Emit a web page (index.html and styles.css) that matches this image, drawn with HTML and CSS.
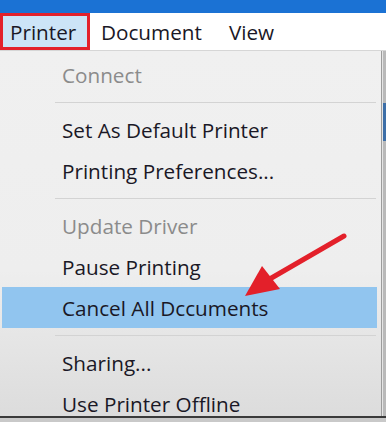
FILE: index.html
```html
<!DOCTYPE html>
<html lang="en">
<head>
    <meta charset="UTF-8">
    <title>Printer menu</title>
    <link rel="stylesheet" href="styles.css">
</head>
<body>
    <div class="window">
        <div class="title-bar"></div>

        <!-- menu bar -->
        <div class="menu-bar">
            <div class="menu-title open">Printer</div>
            <div class="menu-title">Document</div>
            <div class="menu-title">View</div>
        </div>

        <div class="body-row">
            <!-- dropdown -->
            <div class="dropdown">
                <div class="item disabled">Connect</div>
                <div class="separator"></div>
                <div class="item">Set As Default Printer</div>
                <div class="item">Printing Preferences...</div>
                <div class="separator"></div>
                <div class="item disabled">Update Driver</div>
                <div class="item">Pause Printing</div>
                <div class="item selected">Cancel All Dccuments</div>
                <div class="separator"></div>
                <div class="item">Sharing...</div>
                <div class="item">Use Printer Offline</div>
            </div>
            <div class="side-strip">
                <div class="strip-blue"></div>
            </div>
        </div>
        <div class="bottom-edge"></div>

        <!-- annotation arrow -->
        <svg class="arrow" viewBox="0 0 386 422" width="386" height="422">
            <line x1="344" y1="236" x2="268" y2="280" stroke="#e3202a" stroke-width="5" stroke-linecap="round"/>
            <polygon points="245,296 262,266 280,289" fill="#e3202a"/>
        </svg>
    </div>
</body>
</html>
```

FILE: styles.css
```css
* {
    margin: 0;
    padding: 0;
    box-sizing: border-box;
}

body {
    background: #c9c9c9;
    font-family: "Open Sans", "Noto Sans", "Liberation Sans", sans-serif;
}

.window {
    width: 386px;
    height: 422px;
    overflow: hidden;
    position: relative;
    display: flex;
    flex-direction: column;
}

.title-bar {
    height: 13px;
    background: #1b72d4;
}

.menu-bar {
    height: 38px;
    background: #ffffff;
    border-bottom: 1px solid #d6d6d6;
    display: flex;
    align-items: stretch;
}

.menu-title {
    display: flex;
    align-items: center;
    font-size: 20.7px;
    color: #1a1826;
    padding: 0 13px 0 11px;
}

.menu-title + .menu-title + .menu-title {
    padding-left: 14px;
}

.menu-title.open {
    background: #cce4f7;
    border: 3px solid #e3212b;
    padding: 0 0 0 7px;
    width: 90px;
}

.body-row {
    display: flex;
    height: 365px;
}

.dropdown {
    width: 382px;
    height: 100%;
    padding-top: 3px;
    background: linear-gradient(#f0f0f0, #eeeeee 60%, #dcdcdc);
    border-right: 1px solid #9c9c9c;
    overflow: hidden;
}

.item {
    height: 41px;
    display: flex;
    align-items: center;
    padding-left: 60px;
    margin: 0 4px 0 2px;
    font-size: 20.7px;
    color: #1a1826;
}

.item.disabled {
    color: #8b8b8b;
}

.item.selected {
    background: #91c5ef;
}

.separator {
    height: 14px;
    display: flex;
    align-items: center;
    padding: 0 5px 0 55px;
}

.separator::after {
    content: "";
    flex: 1;
    height: 1px;
    background: #d3d3d3;
}

.side-strip {
    flex: 1;
    background: #b9b9b9;
    border-left: 1px solid #e4e4e4;
}

.strip-blue {
    height: 38px;
    margin-top: 52px;
    background: #3d6fa8;
}

.bottom-edge {
    height: 2px;
    background: #3a3a3a;
}

.arrow {
    position: absolute;
    left: 0;
    top: 0;
    pointer-events: none;
}
```
